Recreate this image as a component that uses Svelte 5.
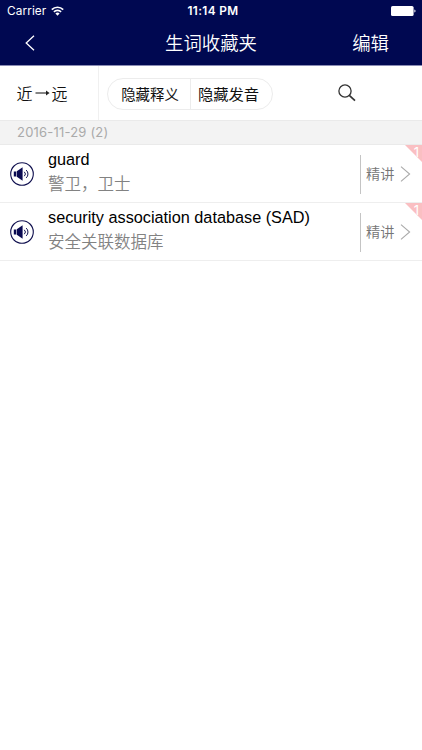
<script lang="ts">
    let newestFirst = $state(true);
    let hideMeaning = $state(false);
    let hideSound = $state(false);

    const date = '2016-11-29';
    const words = [
        { word: 'guard', meaning: '警卫，卫士', level: 1 },
        { word: 'security association database (SAD)', meaning: '安全关联数据库', level: 1 }
    ];

    let list = $derived(newestFirst ? words : [...words].reverse());
</script>

<div class="app">
    <header>
        <div class="status">
            <div class="carrier">
                <span>Carrier</span>
                <svg width="13" height="10" viewBox="0 0 13 10" fill="none" stroke="#fff" stroke-width="1.7">
                    <path d="M0.8 3.6a8.1 8.1 0 0 1 11.4 0" />
                    <path d="M2.9 5.9a5.1 5.1 0 0 1 7.2 0" />
                    <path d="M6.5 9.8L4.4 7.6a2.9 2.9 0 0 1 4.2 0z" fill="#fff" stroke="none" />
                </svg>
            </div>
            <span class="time">11:14 PM</span>
            <svg class="battery" width="25" height="10" viewBox="0 0 25 10">
                <rect width="22.6" height="10" rx="1.6" fill="#fff" />
                <path d="M23.4 3.4a1.7 1.7 0 0 1 0 3.2z" fill="#fff" />
            </svg>
        </div>
        <nav>
            <button class="back" aria-label="返回">
                <svg width="10" height="16" viewBox="0 0 10 16" fill="none" stroke="#fff" stroke-width="1.3">
                    <path d="M9 0.7L1.2 8L9 15.3" />
                </svg>
            </button>
            <h1>生词收藏夹</h1>
            <button class="edit">编辑</button>
        </nav>
    </header>

    <div class="toolbar">
        <button class="sort" onclick={() => (newestFirst = !newestFirst)}>
            <span>{newestFirst ? '近' : '远'}</span>
            <svg width="17" height="8" viewBox="0 0 17 8">
                <path d="M1.5 4h12" stroke="#222" stroke-width="1.1" />
                <path d="M12 1.4L15.6 4L12 6.6z" fill="#222" />
            </svg>
            <span>{newestFirst ? '远' : '近'}</span>
        </button>
        <div class="toggles">
            <button onclick={() => (hideMeaning = !hideMeaning)}>隐藏释义</button>
            <button onclick={() => (hideSound = !hideSound)}>隐藏发音</button>
        </div>
        <button class="search" aria-label="搜索">
            <svg width="18" height="18" viewBox="0 0 18 18" fill="none" stroke="#333">
                <circle cx="7" cy="7" r="6.1" stroke-width="1.3" />
                <path d="M11.3 11.3L17 16.6" stroke-width="1.7" />
            </svg>
        </button>
    </div>

    <div class="date">{date} ({words.length})</div>

    {#each list as item (item.word)}
        <div class="row">
            {#if !hideSound}
                <svg class="sound" width="24" height="24" viewBox="0 0 24 24" fill="none" stroke="#10104f">
                    <circle cx="12" cy="12" r="11.3" stroke-width="1.1" />
                    <path d="M3.8 9.4h2.4v5.2H3.8zM6.8 9.2l5.8-4v13.6l-5.8-4z" fill="#0a0a52" stroke="none" />
                    <path d="M14.3 9.8a3 3 0 0 1 0 4.4M16.2 8.1a5.2 5.2 0 0 1 0 7.8" stroke-width="1" />
                </svg>
            {/if}
            <div class="text">
                <div class="word">{item.word}</div>
                {#if !hideMeaning}
                    <div class="meaning">{item.meaning}</div>
                {/if}
            </div>
            <div class="detail">
                <span>精讲</span>
                <svg width="11" height="16" viewBox="0 0 11 16" fill="none" stroke="#aaa" stroke-width="1.1">
                    <path d="M1 0.6L9.6 8L1 15.4" />
                </svg>
            </div>
            <div class="corner"><span>{item.level}</span></div>
        </div>
    {/each}
</div>

<style>
    :global(body) {
        background: #fff;
    }

    .app {
        width: 100%;
        min-height: 750px;
        font-family: "Liberation Sans", "Noto Sans CJK SC", sans-serif;
        color: #000;
    }

    button {
        padding: 0;
        border: none;
        background: none;
        font: inherit;
        color: inherit;
        cursor: pointer;
    }

    svg {
        display: block;
        flex: none;
    }

    header {
        height: 66px;
        background: #000851;
        border-bottom: 1px solid #8a8cb4;
        box-sizing: border-box;
        color: #fff;
    }

    .status {
        display: grid;
        grid-template-columns: 1fr auto 1fr;
        align-items: center;
        height: 22px;
        padding: 0 6px 0 7px;
        font-family: Inter, sans-serif;
        font-size: 11.8px;
    }

    .carrier {
        display: flex;
        align-items: center;
        gap: 5px;
        letter-spacing: 0.1px;
    }

    .time {
        padding-left: 3px;
        font-weight: 600;
        letter-spacing: 0.4px;
    }

    .battery {
        justify-self: end;
    }

    nav {
        display: grid;
        grid-template-columns: 1fr auto 1fr;
        align-items: center;
        height: 42px;
        padding: 0 33px 0 25px;
        font-family: "Noto Sans CJK SC", sans-serif;
        font-weight: 350;
    }

    h1 {
        margin: 0;
        padding-left: 8px;
        font-size: 18.4px;
        line-height: 38px;
        font-weight: inherit;
    }

    .edit {
        justify-self: end;
        font-size: 18.4px;
        line-height: 38px;
        padding-bottom: 2px;
    }

    h1 {
        padding-bottom: 2px;
    }

    .back {
        justify-self: start;
    }

    .toolbar {
        display: flex;
        align-items: center;
        height: 54px;
        font-family: "Noto Sans CJK SC", sans-serif;
        font-size: 15px;
        color: #111;
    }

    .sort {
        display: flex;
        align-items: center;
        gap: 1px;
        width: 99px;
        height: 54px;
        padding: 0 0 0 16.5px;
        box-sizing: border-box;
        border-right: 1px solid #f0f0f0;
        font-size: 16px;
        font-weight: 350;
    }

    .toggles {
        display: flex;
        width: 166px;
        height: 32px;
        margin: 1px 0 0 8px;
        box-sizing: border-box;
        border: 1px solid #ececec;
        border-radius: 16px;
    }

    .toggles button {
        width: 82px;
        padding-left: 2px;
        font-size: 14.4px;
        line-height: 28px;
    }

    .toggles button + button {
        width: 82px;
        padding: 0 6px 2px 0;
        border-left: 1px solid #ececec;
        font-size: 15.3px;
    }

    .search {
        margin: 0 0 1px 65px;
    }

    .date {
        height: 25px;
        padding-left: 17px;
        box-sizing: border-box;
        border-top: 1px solid #eaeaea;
        border-bottom: 1px solid #eaeaea;
        background: #f3f3f3;
        font-family: Inter, sans-serif;
        font-size: 13px;
        line-height: 23px;
        letter-spacing: 0.2px;
        color: #aaa;
    }

    .row {
        position: relative;
        display: flex;
        align-items: center;
        height: 58px;
        padding-left: 10px;
        box-sizing: border-box;
        border-bottom: 1px solid #eee;
    }

    .text {
        flex: 1;
        margin: 0 0 5px 14px;
        white-space: nowrap;
    }

    .word {
        font-size: 16.25px;
        line-height: 24px;
    }

    .meaning {
        font-family: "Noto Sans CJK SC", sans-serif;
        font-size: 16.5px;
        line-height: 24px;
        font-weight: 350;
        color: #828282;
    }

    .detail {
        display: flex;
        align-items: center;
        justify-content: space-between;
        width: 62px;
        height: 39px;
        margin-top: 1px;
        padding: 0 11px 0 5px;
        box-sizing: border-box;
        border-left: 1px solid #c4c4c4;
        font-family: "Noto Sans CJK SC", sans-serif;
        font-size: 14.2px;
        font-weight: 350;
        color: #757575;
    }

    .detail span {
        padding-bottom: 2px;
    }

    .corner {
        position: absolute;
        top: 0;
        right: 0;
        width: 17px;
        height: 17px;
        background: #fabfc2;
        clip-path: polygon(0 0, 100% 0, 100% 100%);
        color: #fff;
        font-family: Inter, sans-serif;
        font-size: 13px;
        line-height: 15px;
        text-align: right;
    }

    .corner span {
        padding-right: 3px;
    }
</style>
